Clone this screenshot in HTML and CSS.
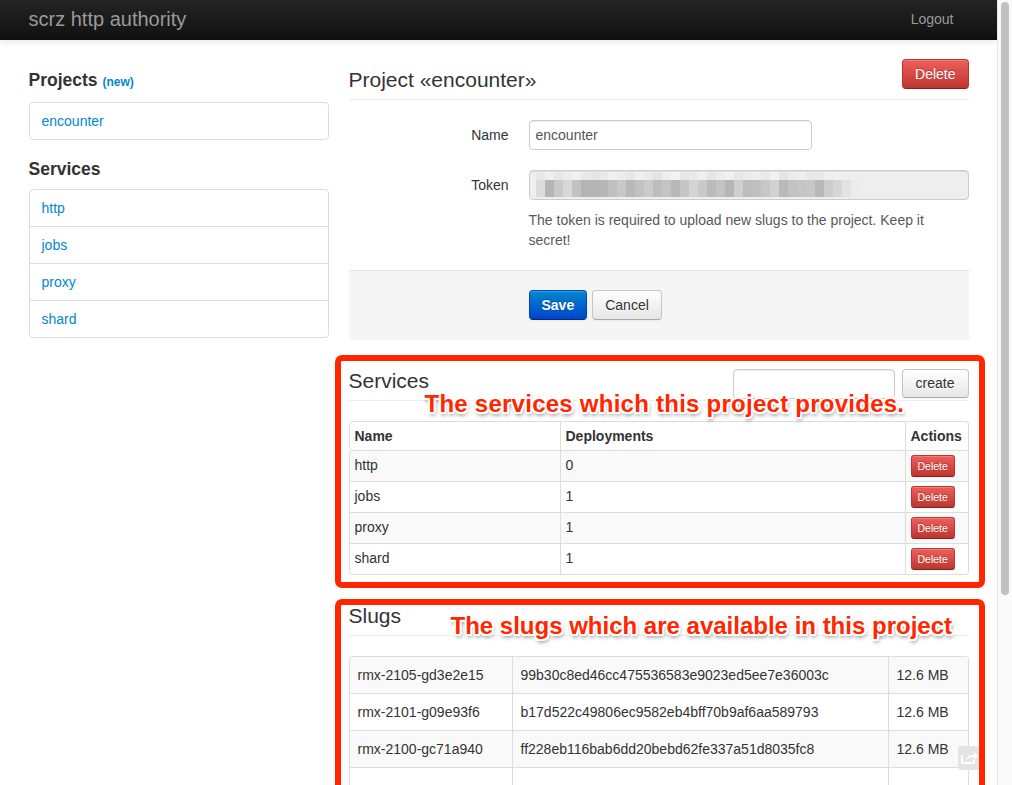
FILE: index.html
```html
<!DOCTYPE html>
<html lang="en">
<head>
<meta charset="utf-8">
<title>scrz http authority</title>
<link rel="stylesheet" href="styles.css">
</head>
<body>
<div class="viewport">
  <header class="navbar">
    <div class="container nav-inner">
      <a class="brand" href="#">scrz http authority</a>
      <a class="logout" href="#">Logout</a>
    </div>
  </header>

  <div class="container page">
    <aside class="sidebar">
      <h4 class="side-title first">Projects <a class="new-link" href="#">(new)</a></h4>
      <ul class="side-list">
        <li><a href="#">encounter</a></li>
      </ul>
      <h4 class="side-title">Services</h4>
      <ul class="side-list">
        <li><a href="#">http</a></li>
        <li><a href="#">jobs</a></li>
        <li><a href="#">proxy</a></li>
        <li><a href="#">shard</a></li>
      </ul>
    </aside>

    <main class="content">
      <div class="page-header">
        <h2 class="title">Project «encounter»</h2>
        <button class="btn btn-danger" type="button">Delete</button>
      </div>

      <form class="form-horizontal">
        <div class="control-group">
          <label class="control-label">Name</label>
          <div class="controls">
            <input class="input input-name" type="text" value="encounter">
          </div>
        </div>
        <div class="control-group">
          <label class="control-label">Token</label>
          <div class="controls">
            <div class="input token-input">
              <svg class="token-blur" width="440" height="28" viewBox="0 0 440 28">
                <g>
                  <rect x="6" y="1" width="9" height="8" fill="#e9e9e9"/><rect x="15" y="1" width="9" height="8" fill="#eeeeee"/><rect x="24" y="1" width="9" height="8" fill="#e8e8e8"/><rect x="33" y="1" width="9" height="8" fill="#ececec"/><rect x="42" y="1" width="9" height="8" fill="#f0f0f0"/><rect x="51" y="1" width="9" height="8" fill="#e9e9e9"/><rect x="60" y="1" width="9" height="8" fill="#e5e5e5"/><rect x="69" y="1" width="9" height="8" fill="#eaeaea"/><rect x="78" y="1" width="9" height="8" fill="#f1f1f1"/><rect x="87" y="1" width="9" height="8" fill="#ececec"/><rect x="96" y="1" width="9" height="8" fill="#e7e7e7"/><rect x="105" y="1" width="9" height="8" fill="#efefef"/><rect x="114" y="1" width="9" height="8" fill="#ebebeb"/><rect x="123" y="1" width="9" height="8" fill="#e4e4e4"/><rect x="132" y="1" width="9" height="8" fill="#eeeeee"/><rect x="141" y="1" width="9" height="8" fill="#f2f2f2"/><rect x="150" y="1" width="9" height="8" fill="#e8e8e8"/><rect x="159" y="1" width="9" height="8" fill="#eaeaea"/><rect x="168" y="1" width="9" height="8" fill="#efefef"/><rect x="177" y="1" width="9" height="8" fill="#e6e6e6"/><rect x="186" y="1" width="9" height="8" fill="#ececec"/><rect x="195" y="1" width="9" height="8" fill="#f0f0f0"/><rect x="204" y="1" width="9" height="8" fill="#e7e7e7"/><rect x="213" y="1" width="9" height="8" fill="#ebebeb"/><rect x="222" y="1" width="9" height="8" fill="#eeeeee"/><rect x="231" y="1" width="9" height="8" fill="#e9e9e9"/><rect x="240" y="1" width="9" height="8" fill="#f1f1f1"/><rect x="249" y="1" width="9" height="8" fill="#e5e5e5"/><rect x="258" y="1" width="9" height="8" fill="#ececec"/><rect x="267" y="1" width="9" height="8" fill="#eeeeee"/><rect x="276" y="1" width="9" height="8" fill="#e8e8e8"/><rect x="285" y="1" width="9" height="8" fill="#eaeaea"/><rect x="294" y="1" width="9" height="8" fill="#efefef"/><rect x="303" y="1" width="9" height="8" fill="#f0f0f0"/><rect x="312" y="1" width="9" height="8" fill="#eeeeee"/><rect x="321" y="1" width="9" height="8" fill="#efefef"/>
                </g>
                <g>
                  <rect x="6" y="9" width="9" height="17" fill="#dcdcdc"/><rect x="15" y="9" width="9" height="17" fill="#b5b5b5"/><rect x="24" y="9" width="9" height="17" fill="#c9c9c9"/><rect x="33" y="9" width="9" height="17" fill="#d8d8d8"/><rect x="42" y="9" width="9" height="17" fill="#c2c2c2"/><rect x="51" y="9" width="9" height="17" fill="#b4b4b4"/><rect x="60" y="9" width="9" height="17" fill="#b4b4b4"/><rect x="69" y="9" width="9" height="17" fill="#b6b6b6"/><rect x="78" y="9" width="9" height="17" fill="#bfbfbf"/><rect x="87" y="9" width="9" height="17" fill="#c8c8c8"/><rect x="96" y="9" width="9" height="17" fill="#b8b8b8"/><rect x="105" y="9" width="9" height="17" fill="#c2c2c2"/><rect x="114" y="9" width="9" height="17" fill="#cbcbcb"/><rect x="123" y="9" width="9" height="17" fill="#bdbdbd"/><rect x="132" y="9" width="9" height="17" fill="#c4c4c4"/><rect x="141" y="9" width="9" height="17" fill="#b8b8b8"/><rect x="150" y="9" width="9" height="17" fill="#c6c6c6"/><rect x="159" y="9" width="9" height="17" fill="#d4d4d4"/><rect x="168" y="9" width="9" height="17" fill="#c9c9c9"/><rect x="177" y="9" width="9" height="17" fill="#bbbbbb"/><rect x="186" y="9" width="9" height="17" fill="#c3c3c3"/><rect x="195" y="9" width="9" height="17" fill="#b6b6b6"/><rect x="204" y="9" width="9" height="17" fill="#cfcfcf"/><rect x="213" y="9" width="9" height="17" fill="#bdbdbd"/><rect x="222" y="9" width="9" height="17" fill="#c0c0c0"/><rect x="231" y="9" width="9" height="17" fill="#c7c7c7"/><rect x="240" y="9" width="9" height="17" fill="#d2d2d2"/><rect x="249" y="9" width="9" height="17" fill="#b9b9b9"/><rect x="258" y="9" width="9" height="17" fill="#c3c3c3"/><rect x="267" y="9" width="9" height="17" fill="#c5c5c5"/><rect x="276" y="9" width="9" height="17" fill="#c7c7c7"/><rect x="285" y="9" width="9" height="17" fill="#b8b8b8"/><rect x="294" y="9" width="9" height="17" fill="#cccccc"/><rect x="303" y="9" width="9" height="17" fill="#d6d6d6"/><rect x="312" y="9" width="9" height="17" fill="#e2e2e2"/><rect x="321" y="9" width="9" height="17" fill="#ececec"/>
                </g>
              </svg>
            </div>
            <p class="help-block">The token is required to upload new slugs to the project. Keep it secret!</p>
          </div>
        </div>
        <div class="form-actions">
          <button class="btn btn-primary" type="button">Save</button>
          <button class="btn" type="button">Cancel</button>
        </div>
      </form>

      <section class="section services">
        <div class="section-header">
          <h3 class="section-title">Services</h3>
          <div class="create-form">
            <input class="input input-create" type="text">
            <button class="btn btn-create" type="button">create</button>
          </div>
        </div>
        <table class="table table-condensed">
          <thead>
            <tr><th class="col-name">Name</th><th class="col-deploy">Deployments</th><th class="col-actions">Actions</th></tr>
          </thead>
          <tbody>
            <tr><td>http</td><td>0</td><td><button class="btn btn-mini btn-danger" type="button">Delete</button></td></tr>
            <tr><td>jobs</td><td>1</td><td><button class="btn btn-mini btn-danger" type="button">Delete</button></td></tr>
            <tr><td>proxy</td><td>1</td><td><button class="btn btn-mini btn-danger" type="button">Delete</button></td></tr>
            <tr><td>shard</td><td>1</td><td><button class="btn btn-mini btn-danger" type="button">Delete</button></td></tr>
          </tbody>
        </table>
        <div class="annot-box"></div>
        <div class="annot-text">The services which this project provides.</div>
      </section>

      <section class="section slugs">
        <div class="section-header">
          <h3 class="section-title">Slugs</h3>
        </div>
        <table class="table table-slugs">
          <tbody>
            <tr><td class="col-slug">rmx-2105-gd3e2e15</td><td class="col-hash">99b30c8ed46cc475536583e9023ed5ee7e36003c</td><td>12.6 MB</td></tr>
            <tr><td>rmx-2101-g09e93f6</td><td>b17d522c49806ec9582eb4bff70b9af6aa589793</td><td>12.6 MB</td></tr>
            <tr><td>rmx-2100-gc71a940</td><td>ff228eb116bab6dd20bebd62fe337a51d8035fc8</td><td>12.6 MB</td></tr>
            <tr class="row-empty"><td></td><td></td><td></td></tr>
          </tbody>
        </table>
        <div class="annot-box"></div>
        <div class="annot-text">The slugs which are available in this project</div>
      </section>
    </main>
  </div>
  <div class="corner-icon">
    <svg width="18" height="14" viewBox="0 0 18 14"><path d="M2 4v8h12V9" fill="none" stroke="#fff" stroke-width="2"/><path d="M6 9c1-4 4-5 8-5V1l4 4-4 4V6c-3 0-6 1-8 3z" fill="#fff"/></svg>
  </div>
</div>
<div class="scrollbar"><div class="thumb"></div></div>
</body>
</html>
```

FILE: styles.css
```css
* { box-sizing: border-box; }

html, body {
  margin: 0;
  height: 785px;
  overflow: hidden;
}

body {
  display: flex;
  font-family: "Liberation Sans", Arial, sans-serif;
  font-size: 14px;
  line-height: 20px;
  color: #333;
  background: #fff;
}

a { color: #0088cc; text-decoration: none; }

.viewport {
  flex: 1;
  position: relative;
  overflow: hidden;
}

.container {
  width: 940px;
  margin: 0 auto;
}

/* navbar */
.navbar {
  height: 40px;
  background: linear-gradient(#242424, #111111);
  border-bottom: 1px solid #0c0c0c;
  box-shadow: 0 1px 8px rgba(0, 0, 0, 0.12);
}
.nav-inner {
  display: flex;
  justify-content: space-between;
  align-items: flex-start;
}
.brand {
  color: #9a9a9a;
  font-size: 20px;
  line-height: 20px;
  padding: 9px 0 10px;
}
.logout {
  color: #999;
  padding: 9px 15px 10px;
}

/* layout */
.page {
  display: flex;
  gap: 20px;
  padding-top: 20px;
}
.sidebar { width: 300px; flex: none; }
.content { width: 620px; flex: none; }

/* sidebar */
.side-title {
  font-size: 17.5px;
  line-height: 20px;
  height: 20px;
  font-weight: bold;
  margin: 19px 0 10px;
  color: #333;
}
.side-title.first { margin: 10px 0 12px; }
.new-link { font-size: 12px; line-height: 12px; }

.side-list {
  list-style: none;
  margin: 0;
  padding: 0;
  border: 1px solid #dddddd;
  border-radius: 4px;
}
.side-list li + li { border-top: 1px solid #dddddd; }
.side-list a {
  display: block;
  padding: 8px 12px;
}

/* page header */
.page-header {
  display: flex;
  justify-content: space-between;
  align-items: flex-start;
  margin-top: -1px;
  height: 41px;
  border-bottom: 1px solid #eeeeee;
}
.title {
  margin: 0;
  font-size: 21px;
  line-height: 41px;
  font-weight: normal;
  color: #333;
}

/* buttons */
.btn {
  font-family: inherit;
  font-size: 14px;
  line-height: 20px;
  height: 30px;
  padding: 4px 12px;
  color: #333;
  background: linear-gradient(#ffffff, #e6e6e6);
  border: 1px solid #c5c5c5;
  border-bottom-color: #a9a9a9;
  border-radius: 4px;
  box-shadow: inset 0 1px 0 rgba(255,255,255,.2), 0 1px 2px rgba(0,0,0,.05);
  text-shadow: 0 1px 1px rgba(255,255,255,.75);
  cursor: pointer;
}
.btn-danger {
  color: #fff;
  background: linear-gradient(#ee5f5b, #bd362f);
  border-color: #bd362f #bd362f #802420;
  text-shadow: 0 -1px 0 rgba(0,0,0,.25);
}
.btn-primary {
  color: #fff;
  font-weight: bold;
  background: linear-gradient(#0088cc, #0044cc);
  border-color: #0044cc #0044cc #002a80;
  text-shadow: 0 -1px 0 rgba(0,0,0,.25);
}
.btn-mini {
  height: 22px;
  padding: 0 6px;
  font-size: 10.5px;
  line-height: 20px;
  border-radius: 3px;
}

/* form */
.form-horizontal { margin-top: 20px; }
.control-group {
  display: flex;
  margin-bottom: 20px;
}
.control-label {
  width: 160px;
  flex: none;
  text-align: right;
  padding-top: 5px;
  margin-right: 20px;
}
.controls { width: 440px; }

.input {
  height: 30px;
  padding: 4px 6px;
  font-family: inherit;
  font-size: 14px;
  line-height: 20px;
  color: #555;
  border: 1px solid #cccccc;
  border-radius: 4px;
  box-shadow: inset 0 1px 1px rgba(0,0,0,.075);
  background: #fff;
  display: block;
}
.input-name { width: 283px; }
.token-input {
  width: 440px;
  padding: 0;
  background: #eeeeee;
  overflow: hidden;
}
.token-blur { display: block; }

.help-block {
  margin: 10px 0 0;
  color: #595959;
}

.form-actions {
  display: flex;
  gap: 5px;
  padding: 19px 20px 20px 180px;
  background: #f5f5f5;
  border-top: 1px solid #e5e5e5;
}

/* sections */
.section {
  position: relative;
  margin-top: 20px;
}
.section-header {
  display: flex;
  justify-content: space-between;
  align-items: flex-start;
  height: 41px;
  border-bottom: 1px solid #eeeeee;
}
.section-title {
  margin: 0;
  font-size: 21px;
  line-height: 41px;
  font-weight: normal;
  color: #333;
}
.create-form {
  display: flex;
  gap: 7px;
  padding-top: 9px;
}
.input-create { width: 162px; }
.btn-create { height: 29px; padding: 3px 13px 4px; }

/* tables */
.table {
  width: 620px;
  margin-top: 20px;
  border: 1px solid #dddddd;
  border-left: 0;
  border-collapse: separate;
  border-spacing: 0;
  border-radius: 4px;
  table-layout: fixed;
}
.table th, .table td {
  text-align: left;
  vertical-align: top;
  border-left: 1px solid #dddddd;
  padding: 8px;
  line-height: 20px;
}
.table tr + tr td,
.table tbody tr:first-child td { border-top: 1px solid #dddddd; }
.table tbody tr:nth-child(odd) td { background: #f9f9f9; }
.table th { font-weight: bold; }

.table-condensed th, .table-condensed td { padding: 4px 5px; }
.table-slugs tbody tr:first-child td { border-top: 0; }
.row-empty td { height: 37px; }

.col-name { width: 211px; }
.col-deploy { width: 345px; }
.col-slug { width: 163px; }
.col-hash { width: 376px; }

.table tr:first-child > :first-child { border-top-left-radius: 4px; }
.table tr:last-child > :first-child { border-bottom-left-radius: 4px; }

/* annotations */
.annot-box {
  position: absolute;
  left: -14px;
  right: -16px;
  top: -5px;
  bottom: -13px;
  border: 6px solid #ff2600;
  border-radius: 7px;
  pointer-events: none;
  z-index: 2;
}
.slugs .annot-box { top: 4px; bottom: -40px; }

.annot-text {
  position: absolute;
  z-index: 3;
  font-size: 24px;
  line-height: 28px;
  font-weight: bold;
  color: #ff2600;
  white-space: nowrap;
  text-shadow:
    -2px 0 0 #fff, 2px 0 0 #fff, 0 -2px 0 #fff, 0 2px 0 #fff,
    -1.5px -1.5px 0 #fff, 1.5px 1.5px 0 #fff, -1.5px 1.5px 0 #fff, 1.5px -1.5px 0 #fff,
    1px 3px 4px rgba(0,0,0,.6);
}
.services .annot-text { left: 76px; top: 30px; letter-spacing: 0.25px; }
.slugs .annot-text { left: 102px; top: 17px; }

/* overlay icon */
.corner-icon {
  position: absolute;
  left: 958px;
  top: 746px;
  width: 22px;
  height: 24px;
  border-radius: 3px;
  background: #e4e4e4;
  display: flex;
  align-items: center;
  justify-content: center;
  z-index: 1;
}

/* fake scrollbar */
.scrollbar {
  width: 15px;
  flex: none;
  height: 785px;
  background: #fafafa;
  border-left: 1px solid #e6e6e6;
  padding: 2px 0 0 3px;
}
.thumb {
  width: 8px;
  height: 593px;
  border-radius: 4px;
  background: #c1c1c1;
}
```
